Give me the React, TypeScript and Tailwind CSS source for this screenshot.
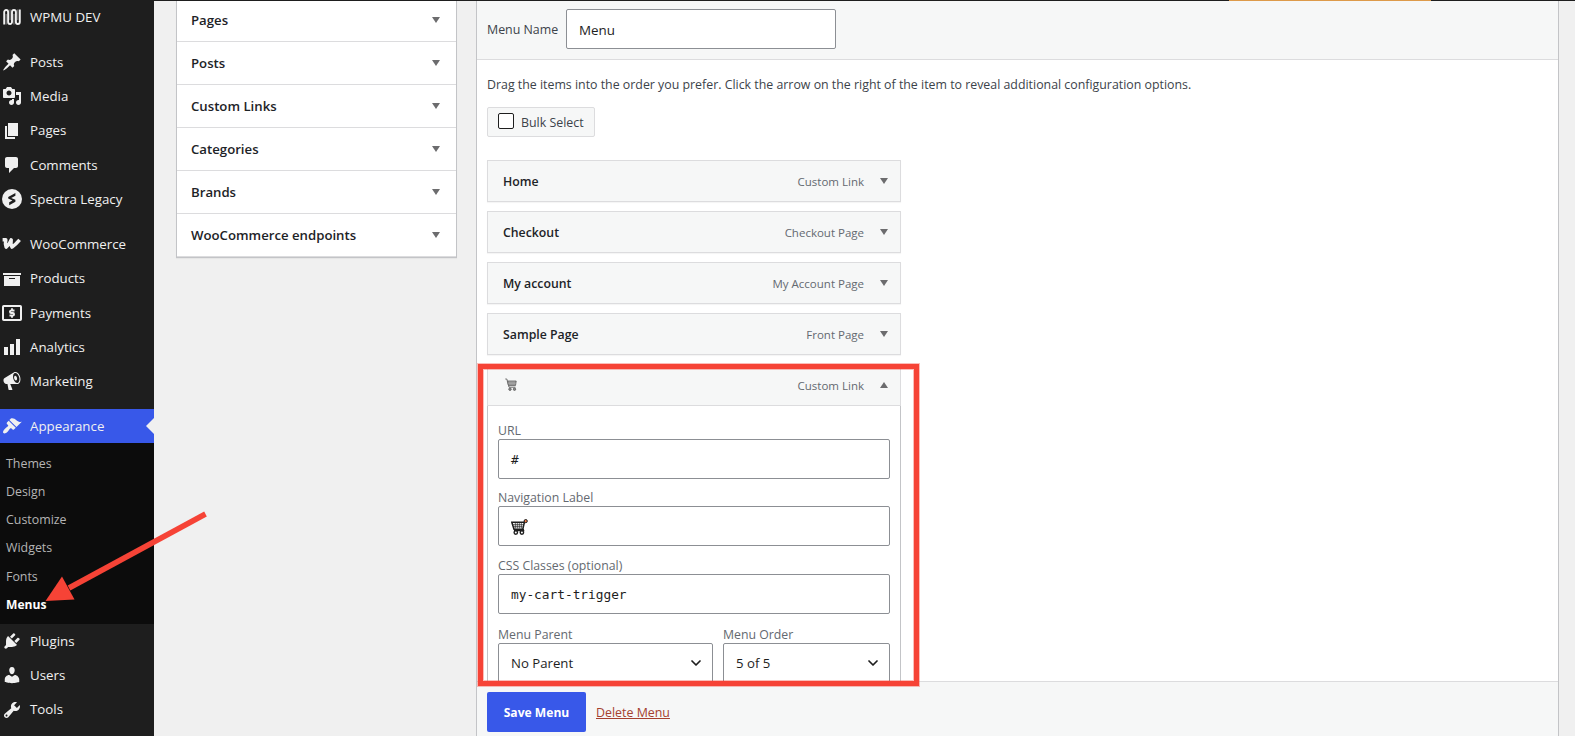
import React from 'react';
import { ChevronDown } from 'lucide-react';

interface IconProps {
  d: string;
}

function Dashicon({ d }: IconProps) {
  return (
    <svg viewBox="0 0 20 20" width={20} height={20} fill="currentColor" className="shrink-0">
      <path d={d} />
    </svg>
  );
}

const paths = {
  post: 'M10.44 3.02l1.82-1.82 6.36 6.35-1.83 1.82c-1.05-.68-2.48-.57-3.41.36l-.75.75c-.92.93-1.04 2.35-.35 3.41l-1.83 1.82-2.41-2.41-2.8 2.79c-.42.42-3.38 2.71-3.8 2.29s1.86-3.39 2.28-3.81l2.79-2.79L4.1 9.36l1.83-1.82c1.05.69 2.48.57 3.4-.36l.75-.75c.93-.92 1.05-2.35.36-3.41z',
  media: 'M13 11V4c0-.55-.45-1-1-1h-1.67L9 1H5L3.67 3H2c-.55 0-1 .45-1 1v7c0 .55.45 1 1 1h10c.55 0 1-.45 1-1zM7 4.5c1.38 0 2.5 1.12 2.5 2.5S8.38 9.5 7 9.5 4.5 8.38 4.5 7 5.62 4.5 7 4.5zM14 6h5v10.5c0 1.38-1.12 2.5-2.5 2.5S14 17.88 14 16.5s1.12-2.5 2.5-2.5c.17 0 .34.02.5.05V9h-3V6zm-4 8.05V13h2v3.5c0 1.38-1.12 2.5-2.5 2.5S7 17.88 7 16.5 8.12 14 9.5 14c.17 0 .34.02.5.05z',
  page: 'M6 15V2h10v13H6zm-1 1h8v2H3V5h2v11z',
  comments: 'M5 2h9c1.1 0 2 .9 2 2v7c0 1.1-.9 2-2 2h-2l-5 5v-5H5c-1.1 0-2-.9-2-2V4c0-1.1.9-2 2-2z',
  archive: 'M19 4v2H1V4h18zM2 7h16v10H2V7zm11 3V9H7v1h6z',
  chart: 'M18 18V2h-4v16h4zm-6 0V7H8v11h4zm-6 0v-8H2v8h4z',
  megaphone: 'M18.15 5.94c.46 1.62.38 3.22-.02 4.48-.42 1.28-1.26 2.18-2.3 2.48-.16.06-.26.06-.4.06-.06.02-.12.02-.18.02-.06.02-.14.02-.22.02h-6.8l2.22 5.5c.02.14-.06.26-.14.34-.08.1-.24.16-.34.16H6.95c-.1 0-.26-.06-.34-.16-.08-.08-.16-.2-.14-.34l-1-5.5H4.25l-.02-.02c-.5.06-1.08-.18-1.54-.62s-.88-1.08-1.06-1.88c-.24-.8-.2-1.56-.02-2.2.18-.62.58-1.08 1.06-1.3l.02-.02 9-5.4c.1-.06.18-.1.24-.16.06-.04.14-.08.24-.12.16-.08.28-.12.5-.18 1.04-.3 2.24.1 3.22.98s1.84 2.24 2.26 3.86zm-2.58 5.98h-.02c.4-.1.74-.34 1.04-.7.58-.7.86-1.76.86-3.04 0-.64-.1-1.3-.28-1.98-.34-1.36-1.02-2.5-1.78-3.24s-1.68-1.1-2.46-.88c-.82.22-1.4.96-1.7 2-.32 1.04-.28 2.36.06 3.72.38 1.36 1 2.5 1.8 3.24.78.74 1.62 1.1 2.48.88zm-2.54-7.08c.22-.04.42-.02.62.04.38.16.76.48 1.02 1s.42 1.2.42 1.78c0 .3-.04.56-.12.8-.18.48-.44.84-.86.94-.34.1-.8-.06-1.14-.4s-.64-.86-.78-1.5c-.18-.62-.12-1.24.02-1.72s.48-.84.82-.94z',
  appearance: 'M14.48 11.06L7.41 3.99l1.5-1.5c.5-.56 2.3-.47 3.51.32 1.21.8 1.43 1.28 2.91 2.1 1.18.64 2.45 1.26 4.45.85zm-.71.71L6.7 4.7 4.93 6.47c-.39.39-.39 1.02 0 1.41l1.06 1.06c.39.39.39 1.03 0 1.42-.6.6-1.43 1.11-2.21 1.69-.35.26-.7.53-1.01.84C1.43 14.23.4 16.08 1.4 17.07c.99 1 2.84-.03 4.18-1.36.31-.31.58-.66.85-1.02.57-.78 1.08-1.61 1.69-2.21.39-.39 1.02-.39 1.41 0l1.06 1.06c.39.39 1.02.39 1.41 0z',
  plugins: 'M13.11 4.36L9.87 7.6 8 5.73l3.24-3.24c.35-.34 1.05-.2 1.56.32.52.51.66 1.21.31 1.55zm-8 1.77l.91-1.12 9.01 9.01-1.19.84c-.71.71-2.63 1.16-3.82 1.16H6.14L4.9 17.26c-.59.59-1.54.59-2.12 0-.59-.58-.59-1.53 0-2.12l1.24-1.24v-3.88c0-1.13.4-3.19 1.09-3.89zm7.26 3.97l3.24-3.24c.34-.35 1.04-.21 1.55.31.52.51.66 1.21.31 1.55l-3.24 3.25z',
  users: 'M10 9.25c-2.27 0-2.73-3.44-2.73-3.44C7 4.02 7.82 2 9.97 2c2.16 0 2.98 2.02 2.71 3.81 0 0-.41 3.44-2.68 3.44zm0 2.57L12.72 10c2.39 0 4.52 2.33 4.52 4.53v2.49s-3.65 1.13-7.24 1.13c-3.65 0-7.24-1.13-7.24-1.13v-2.49c0-2.25 1.94-4.48 4.47-4.48z',
  tools: 'M16.68 9.77c-1.34 1.34-3.3 1.67-4.95.99l-5.41 6.52c-.99.99-2.59.99-3.58 0s-.99-2.59 0-3.57l6.52-5.42c-.68-1.65-.35-3.61.99-4.95 1.28-1.28 3.12-1.62 4.72-1.06l-2.89 2.89 2.82 2.82 2.86-2.87c.53 1.58.18 3.39-1.08 4.65zM3.81 16.21c.4.39 1.04.39 1.43 0 .4-.4.4-1.04 0-1.43-.39-.4-1.03-.4-1.43 0-.39.39-.39 1.03 0 1.43z',
};

function WpmuIcon() {
  return (
    <svg viewBox="0 0 20 20" width={20} height={20} fill="none" stroke="currentColor" strokeWidth={1.9} className="shrink-0">
      <path d="M2.200 17.500V5a1.900 1.900 0 0 1 3.900 0v10a1.900 1.900 0 0 0 3.900 0V5a1.900 1.900 0 0 1 3.900 0v10a1.900 1.900 0 0 0 3.900 0V2.500" />
      <path d="M4.150 17.500V7M8.050 2.500V13M11.950 17.500V7M15.850 2.500V13" strokeWidth={0.500} />
    </svg>
  );
}

function SpectraIcon() {
  return (
    <svg viewBox="0 0 20 20" width={20} height={20} className="shrink-0">
      <circle cx="10" cy="10" r="10" fill="currentColor" />
      <path d="M13.400 4v2.700L9.200 9.100l4.200 1.700v1.900L7.200 16.200v-2.900l3.200-1.900-4.200-1.800V7.900z" fill="#1e1e1e" />
    </svg>
  );
}

function WooIcon() {
  return (
    <svg viewBox="0 0 20 20" width={20} height={20} fill="none" stroke="currentColor" strokeWidth={3.500} className="shrink-0">
      <path d="M.6 5.800h3.200c-.6 3-.7 5.200.3 7.300 2.100-1.700 4-4.200 5.100-7.300-.5 3.200-.4 5.300.8 7.300 2.700-2 4.800-4 7.600-7.300" strokeLinejoin="round" />
    </svg>
  );
}

function PaymentsIcon() {
  return (
    <svg viewBox="0 0 20 20" width={20} height={20} fill="none" stroke="currentColor" className="shrink-0">
      <rect x="1" y="3" width="18" height="14" rx=".8" strokeWidth={2} />
      <path d="M12.500 7.500H9.200a1.200 1.200 0 0 0 0 2.500h1.600a1.200 1.200 0 0 1 0 2.500H7.500M10 5.200v2M10 12.700v2" strokeWidth={1.900} />
    </svg>
  );
}

interface MenuEntry {
  label: string;
  icon: React.ReactNode;
}

const contentLinks: MenuEntry[] = [
  { label: 'Posts', icon: <Dashicon d={paths.post} /> },
  { label: 'Media', icon: <Dashicon d={paths.media} /> },
  { label: 'Pages', icon: <Dashicon d={paths.page} /> },
  { label: 'Comments', icon: <Dashicon d={paths.comments} /> },
  { label: 'Spectra Legacy', icon: <SpectraIcon /> },
];

const shopLinks: MenuEntry[] = [
  { label: 'WooCommerce', icon: <WooIcon /> },
  { label: 'Products', icon: <Dashicon d={paths.archive} /> },
  { label: 'Payments', icon: <PaymentsIcon /> },
  { label: 'Analytics', icon: <Dashicon d={paths.chart} /> },
  { label: 'Marketing', icon: <Dashicon d={paths.megaphone} /> },
];

const adminLinks: MenuEntry[] = [
  { label: 'Plugins', icon: <Dashicon d={paths.plugins} /> },
  { label: 'Users', icon: <Dashicon d={paths.users} /> },
  { label: 'Tools', icon: <Dashicon d={paths.tools} /> },
];

const submenu = ['Themes', 'Design', 'Customize', 'Widgets', 'Fonts', 'Menus'];
const boxes = ['Pages', 'Posts', 'Custom Links', 'Categories', 'Brands', 'WooCommerce endpoints'];

const menuItems = [
  { title: 'Home', type: 'Custom Link' },
  { title: 'Checkout', type: 'Checkout Page' },
  { title: 'My account', type: 'My Account Page' },
  { title: 'Sample Page', type: 'Front Page' },
];

function SideLink({ label, icon }: MenuEntry) {
  return (
    <a className="flex h-[34.3px] items-center gap-2 pl-0.5 text-[13.3px] text-[#f0f0f0]">
      {icon}
      <span className="pt-[1.3px] whitespace-nowrap">{label}</span>
    </a>
  );
}

function Triangle({ up = false }: { up?: boolean }) {
  return (
    <svg viewBox="0 0 8 6" width={8} height={6} className="mb-px shrink-0" fill="#6c6c6e">
      <path d={up ? 'M0 6h8L4 0z' : 'M0 0h8L4 6z'} />
    </svg>
  );
}

function Sidebar() {
  return (
    <nav className="h-full w-[154px] shrink-0 bg-[#1e1e1e]">
      <SideLink label="WPMU DEV" icon={<WpmuIcon />} />
      <div className="h-[10.700px]" />
      {contentLinks.map(link => <SideLink key={link.label} {...link} />)}
      <div className="h-[10.700px]" />
      {shopLinks.map(link => <SideLink key={link.label} {...link} />)}
      <div className="h-[10.200px]" />
      <div className="relative bg-[#3858e9]">
        <SideLink label="Appearance" icon={<Dashicon d={paths.appearance} />} />
        <svg viewBox="0 0 8 16" width={8} height={16} className="absolute top-[9px] right-0" fill="#f0f0f0">
          <path d="M8 0v16L0 8z" />
        </svg>
      </div>
      <ul className="mb-[0.4px] h-[180.500px] bg-[#0c0c0c] pt-[7px]">
        {submenu.map(name => (
          <li
            key={name}
            className={`flex h-[28.2px] items-center pl-1.5 ${name === 'Menus' ? 'text-[12.1px] font-bold text-white' : 'text-[12.4px] text-[#b4b4b4]'}`}
          >
            {name}
          </li>
        ))}
      </ul>
      {adminLinks.map(link => <SideLink key={link.label} {...link} />)}
    </nav>
  );
}

function AddItems() {
  return (
    <div className="ml-[22px] w-[281px] shrink-0 self-start border border-t-0 border-[#c3c4c7] bg-white shadow-[0_1px_1px_rgba(0,0,0,0.04)]">
      {boxes.map((name, i) => (
        <div
          key={name}
          className={`flex items-center justify-between border-b border-[#dcdcde] pr-4 pl-[14px] text-[13.2px] font-semibold text-[#1d2327] ${i === 0 ? 'h-[41px] pb-px' : 'h-[43px]'}`}
        >
          <span className="pt-px">{name}</span>
          <Triangle />
        </div>
      ))}
    </div>
  );
}

function CartSmall() {
  return (
    <svg viewBox="0 0 12 13" width={12} height={13} fill="none" stroke="#6b6b6b" className="mt-[-1px] ml-[2px]">
      <path d="M.3 1h1.500l2.200 8.200h6.500" strokeWidth={1} />
      <path d="M2.300 3h8.900l-.7 4.500H3.500z" fill="#8a8a8a" strokeWidth={0.900} />
      <path d="M5 3v4.500M7 3v4.500M9 3v4.500M2.500 5.200H11" stroke="#c8c8c8" strokeWidth={0.400} />
      <circle cx="5" cy="11.200" r="1.200" fill="#8a8a8a" />
      <circle cx="9.500" cy="11.200" r="1.200" fill="#8a8a8a" />
    </svg>
  );
}

function CartEmoji() {
  return (
    <svg viewBox="0 0 17 16" width={17} height={16} fill="none" stroke="#1d1d1d" className="mt-px">
      <path d="M.8 3.200h12.600l-1.600 7H3z" fill="#fff" strokeWidth={1.500} />
      <path d="M4.300 4v5.500M6.300 4v5.500M8.300 4v5.500M10.300 4v5.500M2 5.700h10M2.500 7.700h9" strokeWidth={0.700} />
      <path d="M12 10l.5 1.500H3M13 4l1.200-2" strokeWidth={1.500} />
      <circle cx="4.800" cy="13.500" r="1.700" fill="#fff" strokeWidth={1.400} />
      <circle cx="10.900" cy="13.500" r="1.700" fill="#fff" strokeWidth={1.400} />
      <circle cx="14.700" cy="2.100" r="1.600" fill="#ef7a45" strokeWidth={1} />
    </svg>
  );
}

interface FieldProps {
  label: string;
  className?: string;
  select?: boolean;
  children: React.ReactNode;
}

function Field({ label, className = '', select = false, children }: FieldProps) {
  return (
    <div className={className}>
      <div className="flex h-[18px] items-center pt-[1.5px] text-[12.3px] whitespace-nowrap text-[#646970]">{label}</div>
      <div className="flex h-10 items-center justify-between rounded-xs border border-[#8c8f94] bg-white pr-2 pl-3 text-[13.2px] text-[#1e1e1e]">
        <span className="pt-px">{children}</span>
        {select && <ChevronDown size={16} strokeWidth={2.600} />}
      </div>
    </div>
  );
}

function MenuEditor() {
  return (
    <div className="ml-[19px] flex h-full w-[1083px] shrink-0 flex-col border-x border-[#c3c4c7] bg-white">
      <div className="flex h-[59px] shrink-0 items-start border-b border-[#dcdcde] bg-[#f6f7f7] pt-2 pl-[10px]">
        <span className="w-[79px] text-[12.4px] leading-[41px] whitespace-nowrap text-[#3c434a]">Menu Name</span>
        <div className="flex h-10 w-[270px] items-center rounded-xs border border-[#8c8f94] bg-white pt-0.5 pl-3 text-[13.4px] text-[#1e1e1e]">
          Menu
        </div>
      </div>

      <div className="min-h-0 flex-1 overflow-hidden pl-[10px]">
        <p className="mt-[15px] h-5 text-[12.36px] leading-5 whitespace-nowrap text-[#3c434a]">
          Drag the items into the order you prefer. Click the arrow on the right of the item to reveal additional configuration options.
        </p>
        <div className="mt-3 flex h-[30px] w-[108px] items-center gap-[7px] rounded-xs border border-[#dcdcde] bg-[#f6f7f7] pl-[10px] text-[12.4px] text-[#3c434a]">
          <span className="mb-0.5 size-4 rounded-xs border border-[#1e1e1e] bg-white" />
          <span className="pt-0.5 whitespace-nowrap">Bulk Select</span>
        </div>

        <div className="mt-[23px] flex w-[414px] flex-col gap-[9px]">
          {menuItems.map(item => (
            <div
              key={item.title}
              className="flex h-[42px] items-center border border-[#dcdcde] bg-[#f6f7f7] pr-3 pl-[15px] shadow-[0_1px_1px_rgba(0,0,0,0.04)]"
            >
              <span className="flex-1 pt-0.5 text-[12.3px] font-semibold text-[#1d2327]">{item.title}</span>
              <span className="mr-4 pt-0.5 text-[11.500px] text-[#646970]">{item.type}</span>
              <Triangle />
            </div>
          ))}
          <div>
            <div className="flex h-[42px] items-center border border-[#dcdcde] bg-[#f6f7f7] pr-3 pl-[15px]">
              <span className="flex-1"><CartSmall /></span>
              <span className="mr-4 pt-0.5 text-[11.500px] text-[#646970]">Custom Link</span>
              <Triangle up />
            </div>
            <div className="h-[340px] border-x border-[#c3c4c7] pt-[15px] pr-[10px] pl-[10px]">
              <Field label="URL" className="mb-[9px]">
                <span className="font-['DejaVu_Sans_Mono',monospace] text-[12.800px]">#</span>
              </Field>
              <Field label="Navigation Label" className="mb-[10px]">
                <CartEmoji />
              </Field>
              <Field label="CSS Classes (optional)" className="mb-[11px]">
                <span className="font-['DejaVu_Sans_Mono',monospace] text-[12.800px]">my-cart-trigger</span>
              </Field>
              <div className="flex gap-[10px]">
                <Field label="Menu Parent" className="w-[215px]" select>No Parent</Field>
                <Field label="Menu Order" className="w-[167px]" select>5 of 5</Field>
              </div>
            </div>
          </div>
        </div>
      </div>

      <div className="flex h-[55px] shrink-0 items-start gap-[10px] border-t border-[#dcdcde] bg-[#f6f7f7] pt-[10px] pl-[10px]">
        <button className="h-10 w-[99px] rounded-xs bg-[#3858e9] pt-0.5 text-[12.1px] font-bold whitespace-nowrap text-white">Save Menu</button>
        <a className="text-[12.4px] leading-[42px] whitespace-nowrap text-[#a5402f] underline">Delete Menu</a>
      </div>
    </div>
  );
}

// Red callouts pointing at the Menus link and the cart menu item
function Callouts() {
  return (
    <>
      <div className="absolute top-[364px] left-[478px] h-[322px] w-[441px] border-[5px] border-[#f64336] shadow-[0_0_0_1px_rgba(246,67,54,0.35),inset_0_0_0_1px_rgba(246,67,54,0.35)]" />
      <svg viewBox="0 0 170 96" width={170} height={96} className="absolute top-[510px] left-[42px]">
        <path d="M163.500 4L27 78" stroke="#f64336" strokeWidth={5.500} />
        <path d="M3.500 91L20 66.500L32.500 89.500z" fill="#f64336" />
      </svg>
    </>
  );
}

export default function App() {
  return (
    <div className="relative flex h-[736px] w-[1575px] overflow-hidden bg-[#f0f0f0] font-['Open_Sans','Noto_Sans',sans-serif]">
      <Sidebar />
      <div className="flex min-w-0 flex-1 flex-col">
        <div className="h-px shrink-0 bg-[#1e1e1e]">
          <div className="ml-[1075px] h-px w-[202px] bg-[#dd9a4a]" />
        </div>
        <div className="flex min-h-0 flex-1">
          <AddItems />
          <MenuEditor />
        </div>
      </div>
      <Callouts />
    </div>
  );
}
